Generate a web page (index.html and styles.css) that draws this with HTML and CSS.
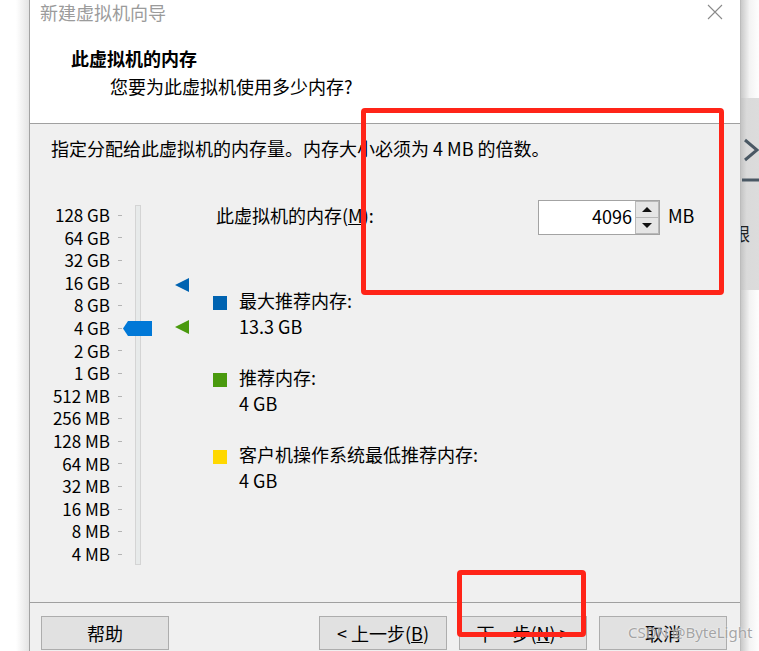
FILE: index.html
```html
<!DOCTYPE html>
<html lang="zh-CN">
  <head>
    <meta charset="UTF-8" />
    <title>新建虚拟机向导</title>
    <link rel="stylesheet" href="styles.css">
  </head>
  <body>
    <div class="screen">
      <div class="shadeLeft"></div>

      <div class="wizard">
        <header class="wizHead">
          <div class="titleBar">
            <span class="title">新建虚拟机向导</span>
            <svg class="closeBtn" width="16" height="16" viewBox="0 0 16 16">
              <path d="M1 1 L15 15 M15 1 L1 15" stroke="#8a8a8a" stroke-width="1.1" fill="none" />
            </svg>
          </div>
          <h1 class="pageTitle">此虚拟机的内存</h1>
          <p class="pageSub">您要为此虚拟机使用多少内存?</p>
        </header>

        <main class="wizBody">
          <p class="hint">指定分配给此虚拟机的内存量。内存大小必须为 4 MB 的倍数。</p>

          <div class="memory">
            <div class="slider">
              <ul class="scaleLabels">
                <li>128 GB</li>
                <li>64 GB</li>
                <li>32 GB</li>
                <li>16 GB</li>
                <li>8 GB</li>
                <li>4 GB</li>
                <li>2 GB</li>
                <li>1 GB</li>
                <li>512 MB</li>
                <li>256 MB</li>
                <li>128 MB</li>
                <li>64 MB</li>
                <li>32 MB</li>
                <li>16 MB</li>
                <li>8 MB</li>
                <li>4 MB</li>
              </ul>
              <ul class="ticks">
                <li></li><li></li><li></li><li></li><li></li><li></li><li></li><li></li>
                <li></li><li></li><li></li><li></li><li></li><li></li><li></li><li></li>
              </ul>
              <div class="track"></div>
              <!-- thumb sits on row 5 (4 GB) -->
              <svg class="thumb" width="29" height="15" viewBox="0 0 29 15">
                <path d="M0 7.5 L5 0 H29 V15 H5 Z" fill="#0078d7" />
              </svg>
            </div>

            <ul class="markers">
              <li></li><li></li><li></li>
              <li><span class="tri blue"></span></li>
              <li></li>
              <li><span class="tri green"></span></li>
            </ul>

            <div class="settings">
              <div class="sizeRow">
                <label class="sizeLabel">此虚拟机的内存(<u>M</u>):</label>
                <div class="spin">
                  <input class="spinInput" type="text" value="4096" />
                  <div class="spinBtns">
                    <span class="spinBtn"><i class="up"></i></span>
                    <span class="spinBtn"><i class="down"></i></span>
                  </div>
                </div>
                <span class="unit">MB</span>
              </div>

              <div class="legend">
                <div class="legendItem">
                  <span class="swatch blue"></span>
                  <div>
                    <div>最大推荐内存:</div>
                    <div>13.3 GB</div>
                  </div>
                </div>
                <div class="legendItem">
                  <span class="swatch green"></span>
                  <div>
                    <div>推荐内存:</div>
                    <div>4 GB</div>
                  </div>
                </div>
                <div class="legendItem">
                  <span class="swatch yellow"></span>
                  <div>
                    <div>客户机操作系统最低推荐内存:</div>
                    <div>4 GB</div>
                  </div>
                </div>
              </div>
            </div>
          </div>
        </main>

        <footer class="wizFoot">
          <button class="btn">帮助</button>
          <div class="navBtns">
            <button class="btn">&lt; 上一步(<u>B</u>)</button>
            <button class="btn">下一步(<u>N</u>) &gt;</button>
            <button class="btn">取消</button>
          </div>
        </footer>
      </div>

      <div class="shadeRight">
        <div class="behind">
          <svg class="behindIcon" width="18" height="50" viewBox="0 0 18 50">
            <path d="M3 4 L15 14 L3 24" stroke="#4a5864" stroke-width="3" fill="none" />
            <path d="M0 44 H18" stroke="#4a5864" stroke-width="3" />
          </svg>
          <span class="behindText">跟</span>
        </div>
      </div>

      <!-- red annotation boxes drawn over the screenshot -->
      <div class="mark markSize"></div>
      <div class="mark markNext"></div>
      <span class="watermark">CSDN @ByteLight</span>
    </div>
  </body>
</html>
```

FILE: styles.css
```css
body {
  margin: 0;
  padding: 0;
  font-family: "Noto Sans CJK SC", "Noto Sans", sans-serif;
  font-size: 18px;
  color: #000;
  overflow: hidden;
}

ul {
  list-style: none;
  margin: 0;
  padding: 0;
}

.screen {
  position: relative;
  display: flex;
  width: 759px;
  height: 651px;
  overflow: hidden;
  background: #fff;
}

.shadeLeft {
  width: 29px;
  flex: none;
  background: linear-gradient(90deg, #fff 55%, #e4e4e4 100%);
}

.wizard {
  width: 710px;
  flex: none;
  display: flex;
  flex-direction: column;
  border-left: 1px solid #a3a3a3;
  border-right: 1px solid #bcbcbc;
  background: #f0f0f0;
}

/* header */
.wizHead {
  height: 124px;
  background: #fff;
  border-bottom: 1px solid #a0a0a0;
  box-sizing: border-box;
}
.titleBar {
  display: flex;
  justify-content: space-between;
  align-items: flex-start;
  height: 26px;
  padding: 0 17px 0 10px;
}
.title {
  color: #9b9b9b;
  line-height: 24px;
}
.closeBtn {
  margin-top: 4px;
}
.pageTitle {
  margin: 20px 0 0 41px;
  font-size: 18px;
  font-weight: bold;
  line-height: 24px;
}
.pageSub {
  margin: 4px 0 0 80px;
  line-height: 24px;
}

/* body */
.wizBody {
  height: 478px;
  border-bottom: 1px solid #a0a0a0;
}
.hint {
  margin: 0;
  padding: 12px 0 0 21px;
  line-height: 24px;
}

.memory {
  display: flex;
  margin-top: 44px;
}

.slider {
  position: relative;
  display: flex;
  width: 145px;
}
.scaleLabels {
  width: 80px;
  flex: none;
  text-align: right;
}
.scaleLabels li {
  height: 22.6px;
  line-height: 22.6px;
  font-size: 17px;
  white-space: nowrap;
}
.ticks {
  width: 4px;
  flex: none;
  margin-left: 8px;
}
.ticks li {
  height: 22.6px;
  display: flex;
  align-items: center;
}
.ticks li::before {
  content: "";
  display: block;
  width: 4px;
  height: 1px;
  background: #b4b4b4;
}
.track {
  width: 4px;
  height: 358px;
  flex: none;
  margin: 1px 0 0 13px;
  background: #e7eaea;
  border: 1px solid #d4d4d4;
}
.thumb {
  position: absolute;
  left: 93px;
  top: calc(22.6px * 5 + 4px);
}

.markers {
  width: 14px;
}
.markers li {
  height: 22.6px;
  display: flex;
  align-items: center;
}
.tri {
  width: 0;
  height: 0;
  border-top: 7px solid transparent;
  border-bottom: 7px solid transparent;
  border-right: 14px solid;
}
.tri.blue {
  border-right-color: #0063b1;
  margin-top: 4px;
}
.tri.green {
  border-right-color: #4a9a0e;
  margin-top: -2px;
}

.settings {
  margin-left: 24px;
}
.sizeRow {
  display: flex;
  align-items: center;
  height: 35px;
  margin-top: -4px;
}
.sizeLabel {
  width: 322px;
  margin-left: 3px;
  margin-top: -5px;
}
.spin {
  display: flex;
  height: 35px;
  border: 1px solid #a3a3a3;
  background: #fff;
  box-sizing: border-box;
}
.spinInput {
  width: 96px;
  border: none;
  padding: 0 3px 0 0;
  text-align: right;
  font-family: inherit;
  font-size: 18px;
  box-sizing: border-box;
  outline: none;
  margin-top: -4px;
  background: transparent;
}
.spinBtns {
  display: flex;
  flex-direction: column;
  width: 24px;
}
.spinBtn {
  flex: 1;
  display: flex;
  align-items: center;
  justify-content: center;
  background: #e5e5e5;
  border: 1px solid #b8b8b8;
}
.spinBtn + .spinBtn {
  border-top: none;
}
.up,
.down {
  width: 0;
  height: 0;
  border-left: 5px solid transparent;
  border-right: 5px solid transparent;
}
.up {
  border-bottom: 5px solid #111;
}
.down {
  border-top: 5px solid #111;
}
.unit {
  margin-left: 8px;
  margin-top: -5px;
}

.legend {
  display: flex;
  flex-direction: column;
  gap: 26px;
  margin-top: 53px;
}
.legendItem {
  display: flex;
  align-items: flex-start;
  line-height: 25.5px;
}
.swatch {
  width: 14px;
  height: 14px;
  margin: 8px 12px 0 0;
  flex: none;
}
.swatch.blue { background: #0063b1; }
.swatch.green { background: #4a9a0e; }
.swatch.yellow { background: #ffd800; }

/* footer */
.wizFoot {
  flex: 1;
  display: flex;
  justify-content: space-between;
  align-items: flex-start;
  padding: 13px 13px 0 11px;
}
.navBtns {
  display: flex;
  gap: 12px;
}
.btn {
  width: 128px;
  height: 34px;
  background: #e1e1e1;
  border: 1px solid #adadad;
  font-family: inherit;
  font-size: 18px;
  color: #000;
  padding: 0;
}

/* what shows behind the dialog */
.shadeRight {
  flex: 1;
  background: linear-gradient(90deg, #c9c9c9 0%, #f3f3f3 45%, #fff 100%);
}
.behind {
  margin-top: 98px;
  height: 192px;
  background: linear-gradient(90deg, #c4c4c4 0%, #dadada 30%, #dcdcdc 100%);
  overflow: hidden;
  position: relative;
}
.behindIcon {
  display: block;
  margin: 38px 0 0 1px;
}
.behindText {
  display: block;
  margin: 34px 0 0 -9px;
  color: #222;
}

.mark {
  position: absolute;
  border: 5px solid #ff2418;
  border-radius: 4px;
  box-sizing: border-box;
}
.markSize {
  left: 361px;
  top: 108px;
  width: 363px;
  height: 187px;
}
.markNext {
  left: 457px;
  top: 570px;
  width: 129px;
  height: 67px;
}
.watermark {
  position: absolute;
  left: 628px;
  top: 622px;
  font-family: "Noto Sans", sans-serif;
  font-size: 15px;
  color: rgba(150, 150, 150, 0.85);
  text-shadow: 0 0 2px #fff;
}
```
